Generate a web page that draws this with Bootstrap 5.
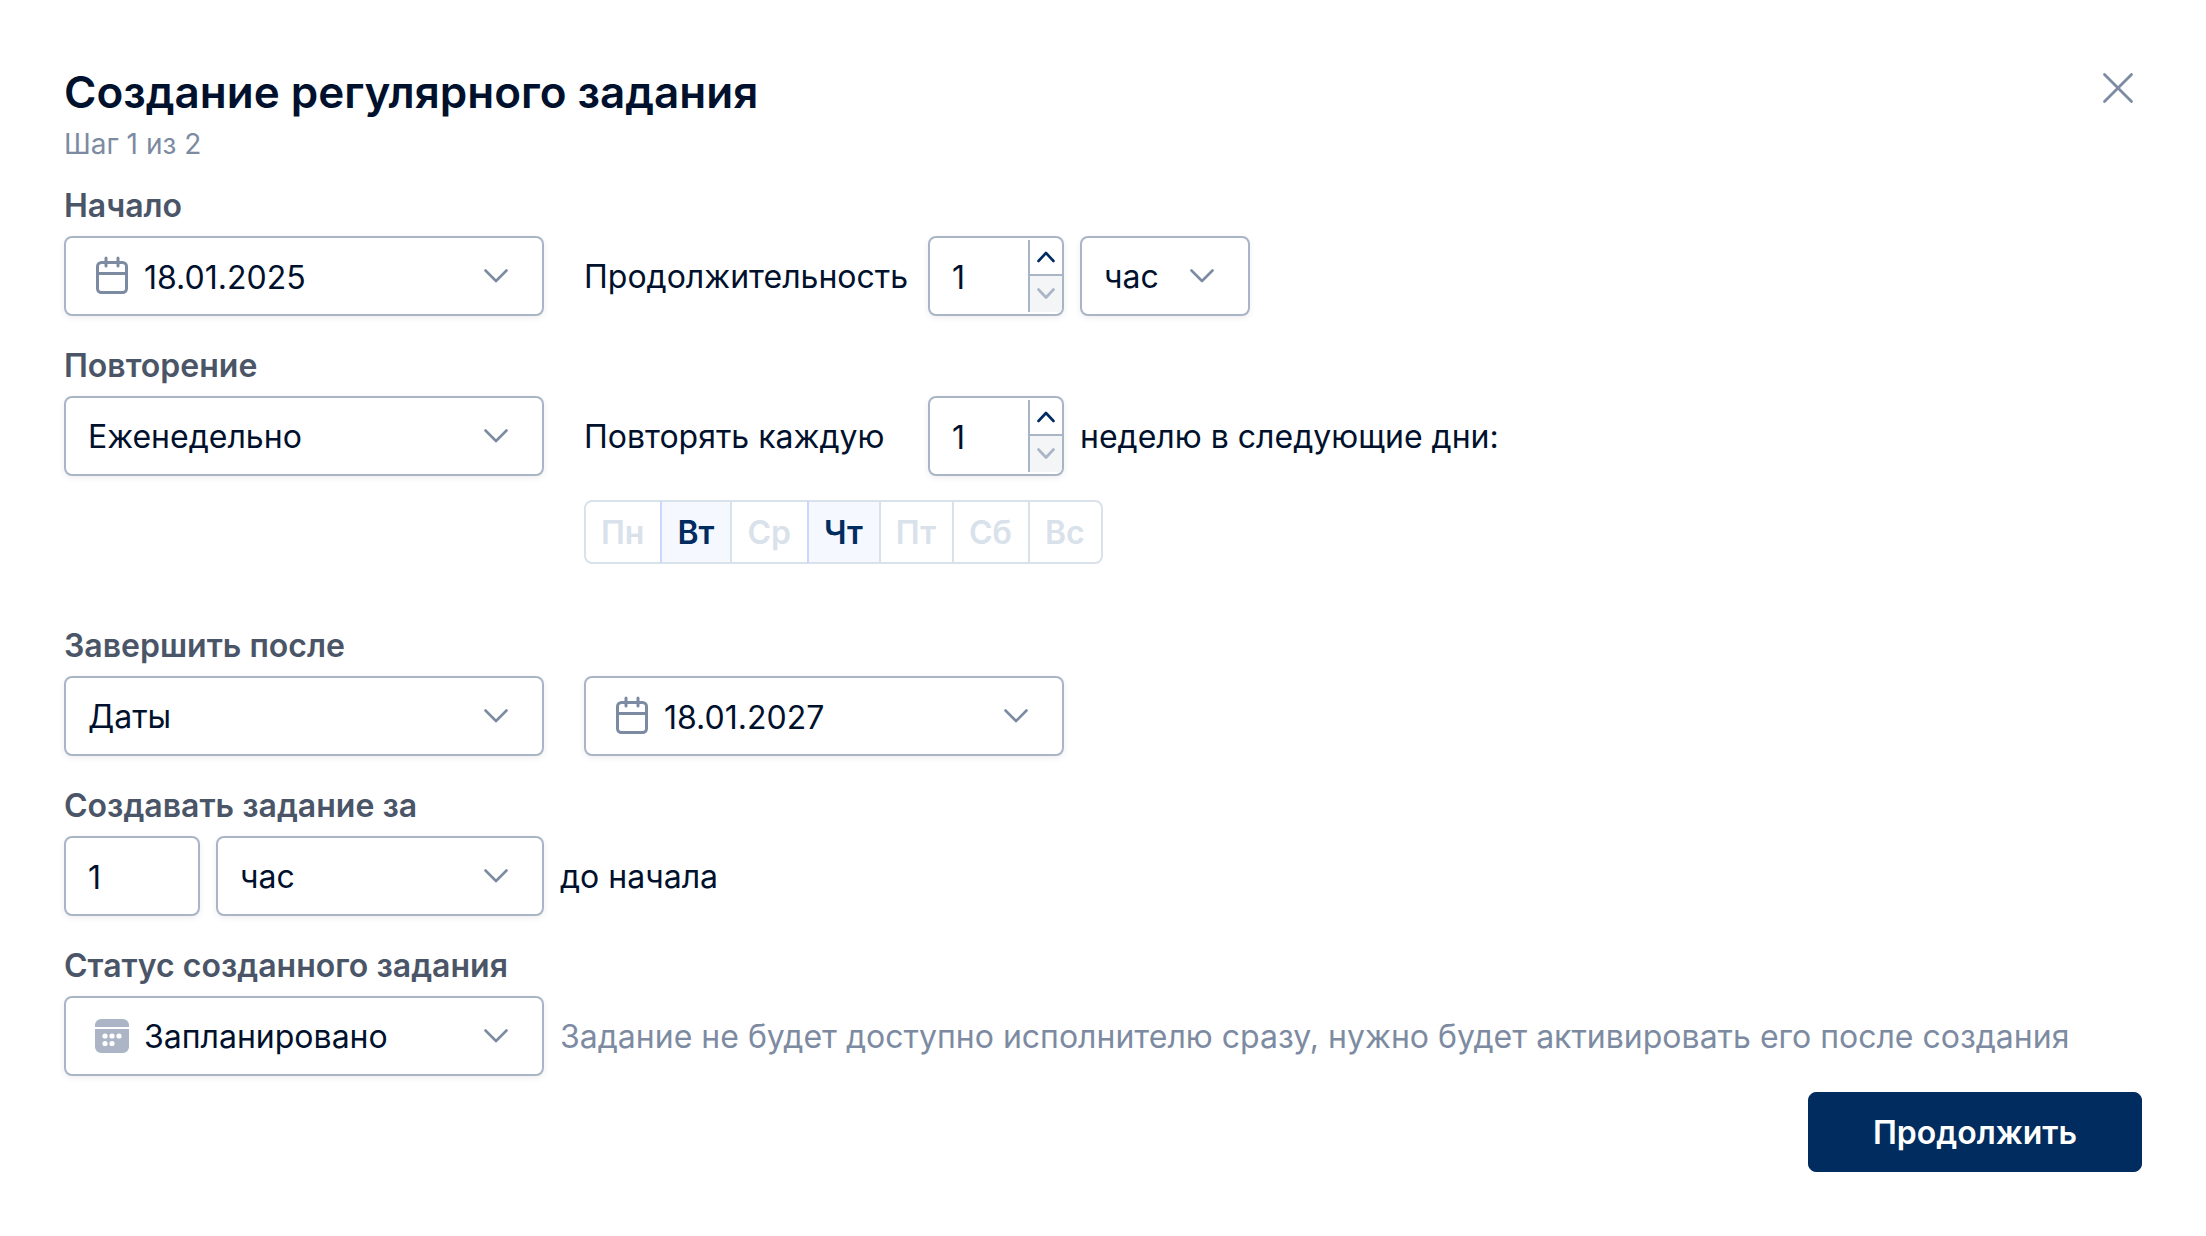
<!DOCTYPE html>
<html lang="ru">
<head>
<meta charset="utf-8">
<meta name="viewport" content="width=device-width, initial-scale=1">
<title>Создание регулярного задания</title>
<link href="https://cdn.jsdelivr.net/npm/bootstrap@5.3.0/dist/css/bootstrap.min.css" rel="stylesheet">
<style>
:root { --ink: #00112d; --muted: #7d8ba2; --edge: #a9b5c7; --navy: #002c5f; --pale: #d9e2eb; --chevron: url("data:image/svg+xml,%3Csvg xmlns='http://www.w3.org/2000/svg' viewBox='0 0 24 14'%3E%3Cpath d='M1.5 1.5 12 12 22.5 1.5' fill='none' stroke='%237d8ba2' stroke-width='2.6' stroke-linecap='round' stroke-linejoin='round'/%3E%3C/svg%3E"); }
body { font-family: Inter, "Noto Sans", sans-serif; font-size: 32px; line-height: 40px; color: var(--ink); background: #fff; }
.dialog-page { padding: 64px; }
.dialog-title { font-size: 44px; line-height: 56px; font-weight: 600; margin-bottom: 4px; }
.step-note { font-size: 28px; line-height: 40px; color: var(--muted); margin-bottom: 22px; }
.close-btn { width: 48px; height: 48px; border: 0; background: none; padding: 0; color: var(--muted); }
.group-label { display: block; font-size: 32px; line-height: 40px; font-weight: 600; color: #4b5568; margin-bottom: 10px; }
.form-line { margin-bottom: 30px; }
.line-items { gap: 16px; }
.line-items label, .line-items span { padding-top: 2px; }
.main-col { width: 480px; flex: none; }
.side-col { margin-left: 24px; }
.side-text { width: 328px; }
.box-field { height: 80px; border: 2px solid var(--edge); border-radius: 8px; background-color: #fff; color: var(--ink); font-size: 32px; line-height: 40px; box-shadow: 0 2px 6px rgba(0, 17, 45, .07); }
.form-select.box-field, .form-control.box-field { padding: 2px 22px 0; }
.form-select { background-image: var(--chevron); background-size: 24px 14px; background-position: right 34px center; }
.icon-field { padding-left: 26px; }
.icon-field .form-select, .icon-field .form-control { height: 76px; border: 0; background-color: transparent; box-shadow: none; font-size: 32px; line-height: 40px; padding: 2px 0 0 12px; color: var(--ink); min-width: 0; }
.icon-field svg { flex: none; }
.open-btn { border: 0; background: none; padding: 0 34px; height: 76px; }
.unit-select { width: 170px; }
.num-box { width: 136px; flex: none; }
.num-box input { border: 0; height: 76px; padding: 2px 0 0 22px; color: var(--ink); font-size: 32px; background: transparent; min-width: 0; border-radius: 8px; box-shadow: none; }
.spin-col { width: 34px; flex: none; border-left: 2px solid var(--edge); margin: 2px 0; }
.spin-col button { border: 0; padding: 0; background: none; color: var(--navy); height: 34px; }
.spin-col button + button { border-top: 2px solid var(--edge); background: #f3f5f6; color: var(--edge); height: 38px; border-bottom-right-radius: 4px; }
.day-row { padding-left: 520px; margin-top: 24px; margin-bottom: 62px; }
.day-group .btn { --bs-btn-color: var(--pale); --bs-btn-border-color: var(--pale); --bs-btn-hover-color: var(--navy); --bs-btn-active-color: var(--navy); --bs-btn-active-bg: #f5f9ff; --bs-btn-active-border-color: var(--pale); border-width: 2px; border-radius: 8px; height: 64px; padding: 11px 16px 9px 15px; font-size: 32px; line-height: 40px; font-weight: 600; flex: none; }
.day-group.btn-group > .btn:not(:first-of-type) { margin-left: -2px; }
.day-group.btn-group > .btn-check:checked + .btn { border-left-color: #c9d8fa; }
.hint-text { color: var(--muted); }
.next-btn { --bs-btn-bg: var(--navy); --bs-btn-border-color: var(--navy); --bs-btn-color: #fff; --bs-btn-hover-bg: #003d80; --bs-btn-hover-color: #fff; height: 80px; border-radius: 8px; font-size: 32px; line-height: 40px; font-weight: 600; padding: 2px 64px 0; }
</style>
<script src="https://cdn.jsdelivr.net/npm/bootstrap@5.3.0/dist/js/bootstrap.bundle.min.js"></script>
</head>
<body>
<svg class="d-none" aria-hidden="true">
  <symbol id="calendar" viewBox="0 0 40 40"><g fill="none" stroke="#7d8ba2" stroke-width="3" stroke-linecap="round"><rect x="5.5" y="6.5" width="29" height="30" rx="4"/><path d="M5.5 17.5h29M14 2v8M26 2v8"/></g></symbol>
  <symbol id="planned" viewBox="0 0 40 40"><path fill="#abb5c5" d="M3 11V9a6 6 0 0 1 6-6h22a6 6 0 0 1 6 6v2zM3 13h34v18a6 6 0 0 1-6 6H9a6 6 0 0 1-6-6z"/><g fill="#fff"><circle cx="13" cy="20" r="2.6"/><circle cx="20" cy="20" r="2.6"/><circle cx="27" cy="20" r="2.6"/><circle cx="13" cy="27.5" r="2.6"/><circle cx="20" cy="27.5" r="2.6"/></g></symbol>
  <symbol id="down" viewBox="0 0 24 14"><path d="M1.5 1.5 12 12 22.5 1.5" fill="none" stroke="#7d8ba2" stroke-width="2.6" stroke-linecap="round" stroke-linejoin="round"/></symbol>
  <symbol id="spin-up" viewBox="0 0 18 12"><path d="m1.5 10 7.500-8 7.500 8" fill="none" stroke="currentColor" stroke-width="2.600" stroke-linecap="round" stroke-linejoin="round"/></symbol>
  <symbol id="spin-down" viewBox="0 0 18 12"><path d="m1.500 1.500 7.500 8 7.500-8" fill="none" stroke="currentColor" stroke-width="2.600" stroke-linecap="round" stroke-linejoin="round"/></symbol>
</svg>
<main class="dialog-page">
  <header class="d-flex justify-content-between align-items-start">
    <div>
      <h1 class="dialog-title">Создание регулярного задания</h1>
      <p class="step-note">Шаг 1 из 2</p>
    </div>
    <button type="button" class="close-btn d-flex align-items-center justify-content-center" aria-label="Закрыть">
      <svg width="32" height="32" viewBox="0 0 32 32"><path d="m2.500 2.500 27 27M29.500 2.500l-27 27" fill="none" stroke="currentColor" stroke-width="2.800" stroke-linecap="round"/></svg>
    </button>
  </header>
  <form>
    <section class="form-line">
      <label class="group-label" for="start">Начало</label>
      <div class="line-items d-flex align-items-center">
        <div class="box-field icon-field main-col d-flex align-items-center">
          <svg width="40" height="40"><use href="#calendar"/></svg>
          <input class="form-control" id="start" type="text" value="18.01.2025">
          <button type="button" class="open-btn d-flex align-items-center" aria-label="Открыть календарь"><svg width="24" height="14"><use href="#down"/></svg></button>
        </div>
        <div class="line-items side-col d-flex align-items-center">
          <label class="side-text" for="duration">Продолжительность</label>
          <div class="box-field num-box d-flex">
            <input class="form-control" id="duration" type="text" inputmode="numeric" value="1">
            <div class="spin-col d-flex flex-column">
              <button type="button" class="d-flex align-items-center justify-content-center" aria-label="Больше"><svg width="18" height="12"><use href="#spin-up"/></svg></button>
              <button type="button" class="d-flex align-items-center justify-content-center" aria-label="Меньше"><svg width="18" height="12"><use href="#spin-down"/></svg></button>
            </div>
          </div>
          <select class="form-select box-field unit-select" aria-label="Единица продолжительности"><option>час</option></select>
        </div>
      </div>
    </section>
    <section>
      <label class="group-label" for="repeat">Повторение</label>
      <div class="line-items d-flex align-items-center">
        <select class="form-select box-field main-col" id="repeat"><option>Еженедельно</option></select>
        <div class="line-items side-col d-flex align-items-center">
          <label class="side-text" for="interval">Повторять каждую</label>
          <div class="box-field num-box d-flex">
            <input class="form-control" id="interval" type="text" inputmode="numeric" value="1">
            <div class="spin-col d-flex flex-column">
              <button type="button" class="d-flex align-items-center justify-content-center" aria-label="Больше"><svg width="18" height="12"><use href="#spin-up"/></svg></button>
              <button type="button" class="d-flex align-items-center justify-content-center" aria-label="Меньше"><svg width="18" height="12"><use href="#spin-down"/></svg></button>
            </div>
          </div>
          <span>неделю в следующие дни:</span>
        </div>
      </div>
      <div class="day-row d-flex">
        <div class="btn-group day-group" role="group" aria-label="Дни недели">
          <input type="checkbox" class="btn-check" id="mon"><label class="btn" for="mon">Пн</label>
          <input type="checkbox" class="btn-check" id="tue" checked><label class="btn" for="tue">Вт</label>
          <input type="checkbox" class="btn-check" id="wed"><label class="btn" for="wed">Ср</label>
          <input type="checkbox" class="btn-check" id="thu" checked><label class="btn" for="thu">Чт</label>
          <input type="checkbox" class="btn-check" id="fri"><label class="btn" for="fri">Пт</label>
          <input type="checkbox" class="btn-check" id="sat"><label class="btn" for="sat">Сб</label>
          <input type="checkbox" class="btn-check" id="sun"><label class="btn" for="sun">Вс</label>
        </div>
      </div>
    </section>
    <section class="form-line">
      <label class="group-label" for="finish">Завершить после</label>
      <div class="line-items d-flex align-items-center">
        <select class="form-select box-field main-col" id="finish"><option>Даты</option></select>
        <div class="box-field icon-field main-col side-col d-flex align-items-center">
          <svg width="40" height="40"><use href="#calendar"/></svg>
          <input class="form-control" type="text" value="18.01.2027" aria-label="Дата завершения">
          <button type="button" class="open-btn d-flex align-items-center" aria-label="Открыть календарь"><svg width="24" height="14"><use href="#down"/></svg></button>
        </div>
      </div>
    </section>
    <section class="form-line">
      <label class="group-label" for="before">Создавать задание за</label>
      <div class="line-items d-flex align-items-center">
        <div class="line-items main-col d-flex">
          <input class="form-control box-field num-box" id="before" type="text" inputmode="numeric" value="1">
          <select class="form-select box-field" aria-label="Единица времени"><option>час</option></select>
        </div>
        <span>до начала</span>
      </div>
    </section>
    <section>
      <label class="group-label" for="status">Статус созданного задания</label>
      <div class="line-items d-flex align-items-center">
        <div class="box-field icon-field main-col d-flex align-items-center">
          <svg width="40" height="40"><use href="#planned"/></svg>
          <select class="form-select" id="status"><option>Запланировано</option></select>
        </div>
        <span class="hint-text">Задание не будет доступно исполнителю сразу, нужно будет активировать его после создания</span>
      </div>
    </section>
    <div class="d-flex justify-content-end mt-3">
      <button type="submit" class="btn next-btn">Продолжить</button>
    </div>
  </form>
</main>
</body>
</html>
